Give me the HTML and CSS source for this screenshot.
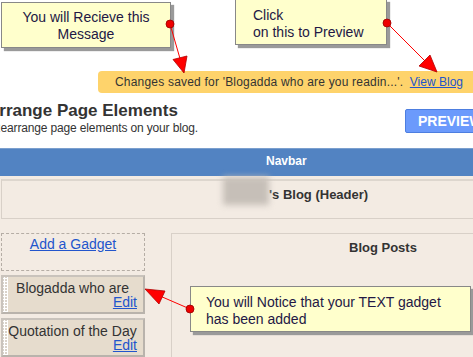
FILE: index.html
```html
<!DOCTYPE html>
<html lang="en">
<head>
    <meta charset="UTF-8">
    <title>Arrange Page Elements</title>
    <link rel="stylesheet" href="styles.css">
</head>
<body>
    <div class="page">
        <div class="top">
            <div class="message">Changes saved for 'Blogadda who are you readin...'. <a href="#">View Blog</a></div>
            <div class="title-row">
                <div class="title">
                    <h1>Arrange Page Elements</h1>
                    <p>Rearrange page elements on your blog.</p>
                </div>
                <button class="preview">PREVIEW</button>
            </div>
        </div>

        <div class="navbar">Navbar</div>

        <div class="canvas">
            <div class="header-box">
                <span class="blurred"></span><span class="header-text">'s Blog (Header)</span>
            </div>
            <div class="columns">
                <div class="sidebar">
                    <div class="add-gadget"><a href="#">Add a Gadget</a></div>
                    <div class="gadget">
                        <div class="handle"></div>
                        <div class="gadget-body">
                            <div class="gadget-title">Blogadda who are</div>
                            <a href="#" class="edit">Edit</a>
                        </div>
                    </div>
                    <div class="gadget">
                        <div class="handle"></div>
                        <div class="gadget-body">
                            <div class="gadget-title">Quotation of the Day</div>
                            <a href="#" class="edit">Edit</a>
                        </div>
                    </div>
                </div>
                <div class="main">
                    <div class="main-title">Blog Posts</div>
                </div>
            </div>
        </div>

        <!-- annotations -->
        <div class="note note-1">You will Recieve this<br>Message</div>
        <div class="note note-2">Click<br>on this to Preview</div>
        <div class="note note-3">You will Notice that your TEXT gadget<br>has been added</div>

        <svg class="arrows" width="473" height="357" viewBox="0 0 473 357">
            <g stroke="#ff0000" stroke-width="1">
                <line x1="170" y1="24" x2="181" y2="62"/>
                <line x1="387" y1="23" x2="426" y2="62"/>
                <line x1="190" y1="309" x2="160" y2="296"/>
            </g>
            <g fill="#ff0000" stroke="#b00000" stroke-width="0.8" stroke-linejoin="round">
                <polygon points="184,73 187,56 173,59.5"/>
                <polygon points="437,72 430,55 419,66"/>
                <polygon points="145,289 165,291 159,304"/>
            </g>
            <g fill="#ee0000" stroke="#990000" stroke-width="0.8">
                <circle cx="170" cy="24" r="4"/>
                <circle cx="387" cy="23" r="4"/>
                <circle cx="190" cy="309" r="4"/>
            </g>
        </svg>
    </div>
</body>
</html>
```

FILE: styles.css
```css
* {
    box-sizing: border-box;
    margin: 0;
    padding: 0;
}
body {
    width: 473px;
    height: 357px;
    overflow: hidden;
    background-color: #ffffff;
    font-family: "Liberation Sans", Arial, sans-serif;
    color: #333333;
}
.page {
    position: relative;
    width: 473px;
    height: 357px;
    overflow: hidden;
}
a {
    color: #2255cc;
}

.top {
    height: 148px;
    padding-top: 71px;
}
.message {
    margin-left: 98px;
    height: 22px;
    line-height: 22px;
    padding-left: 17px;
    background-color: #fed36b;
    border-radius: 4px 0 0 4px;
    font-size: 12px;
    letter-spacing: 0.2px;
    color: #333333;
    white-space: nowrap;
}
.message a {
    margin-left: 3px;
    letter-spacing: 0;
}
.title-row {
    display: flex;
    justify-content: space-between;
    margin-top: 8px;
}
.title h1 {
    margin-left: -13px;
    font-size: 17px;
    line-height: 20px;
    color: #333333;
    white-space: nowrap;
}
.title p {
    margin-left: -8px;
    font-size: 12px;
    letter-spacing: -0.15px;
    line-height: 14px;
    color: #333333;
    white-space: nowrap;
}
.preview {
    margin-top: 8px;
    margin-right: -20px;
    width: 88px;
    height: 24px;
    background-color: #6b9afc;
    border: 1px solid #4d7ee0;
    border-radius: 2px;
    color: #ffffff;
    font-family: "Liberation Sans", Arial, sans-serif;
    font-weight: bold;
    font-size: 14px;
    text-align: left;
    padding-left: 12px;
}

.navbar {
    height: 28px;
    background-color: #5283c2;
    border-top: 1px solid #7b9fce;
    color: #ffffff;
    font-weight: bold;
    font-size: 12px;
    padding: 5px 0 0 266px;
}

.canvas {
    background-color: #f3ebe3;
    height: 181px;
    padding: 3px 0 0 1px;
}
.header-box {
    height: 40px;
    margin-right: -10px;
    border: 1px solid #d8d0c8;
    border-top: 2px solid #ddd6ce;
    font-weight: bold;
    font-size: 13px;
    color: #333333;
    padding: 5px 0 0 221px;
    display: flex;
    align-items: flex-start;
}
.blurred {
    display: inline-block;
    width: 46px;
    height: 28px;
    margin-top: -9px;
    background-color: #c6bfb8;
    filter: blur(3px);
}
.header-text {
    margin-top: 1px;
}

.columns {
    display: flex;
    margin-top: 14px;
}
.sidebar {
    width: 144px;
    display: flex;
    flex-direction: column;
    gap: 4px;
}
.add-gadget {
    height: 38px;
    border: 1px dashed #b5ada5;
    text-align: center;
    font-size: 14px;
    padding-top: 2px;
}
.gadget {
    display: flex;
    height: 39px;
    background-color: #e6dccd;
    border: 2px solid #b9b3ac;
    border-top-color: #c9c3bc;
    border-left-color: #c9c3bc;
}
.handle {
    width: 5px;
    background-color: #d9d2c9;
    background-image: radial-gradient(circle, #ffffff 1px, transparent 1.2px);
    background-size: 3px 3px;
}
.gadget-body {
    flex: 1;
    display: flex;
    flex-direction: column;
    padding: 5px 6px 0 0;
    font-size: 14px;
    line-height: 13px;
}
.gadget-title {
    text-align: center;
    color: #333333;
    white-space: nowrap;
}
.edit {
    align-self: flex-end;
    margin-top: 1px;
}

.main {
    flex: 1;
    margin-left: 26px;
    margin-right: -20px;
    border-left: 1px solid #d8d0c8;
    border-top: 1px solid #d8d0c8;
    padding: 6px 0 0 177px;
    font-weight: bold;
    font-size: 13px;
}

.note {
    position: absolute;
    background-color: #ffffcc;
    border: 1px solid #888888;
    box-shadow: 3px 3px 1px #9a9a9a;
    font-size: 14px;
    line-height: 17px;
    color: #231845;
}
.note-1 {
    left: 1px;
    top: 2px;
    width: 170px;
    height: 46px;
    text-align: center;
    padding-top: 6px;
}
.note-2 {
    left: 235px;
    top: -1px;
    width: 152px;
    height: 46px;
    padding: 7px 0 0 17px;
}
.note-3 {
    left: 190px;
    top: 286px;
    width: 281px;
    height: 46px;
    padding: 7px 0 0 15px;
}
.arrows {
    position: absolute;
    left: 0;
    top: 0;
    pointer-events: none;
}
```
